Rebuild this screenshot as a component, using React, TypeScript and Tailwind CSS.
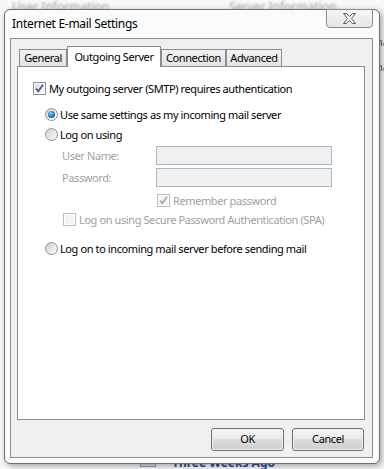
const F = { fontFamily: '"Noto Sans", "Open Sans", sans-serif' };

function CheckBox({ checked, disabled }: { checked?: boolean; disabled?: boolean }) {
  return (
    <div className={`w-[13px] h-[13px] shrink-0 border ${disabled ? 'border-[#bcbcbc]' : 'border-[#8e8f8f]'} bg-white p-px`}>
      <div className={`w-full h-full ${disabled ? 'bg-[#f4f4f4]' : 'bg-gradient-to-br from-[#dcdcdc] to-[#fafafa]'} flex items-center justify-center`}>
        {checked && (
          <svg width="9" height="9" viewBox="0 0 9 9">
            <path d="M1 4.5 L3.3 7.3 L8 0.8" fill="none" stroke={disabled ? '#a8a8a8' : '#3d5a9e'} strokeWidth="1.8" />
          </svg>
        )}
      </div>
    </div>
  );
}

function Radio({ checked }: { checked?: boolean }) {
  return (
    <div className="w-[13px] h-[13px] shrink-0 rounded-full border border-[#8e8f8f] bg-gradient-to-br from-[#d5d5d5] to-[#ffffff] flex items-center justify-center">
      <div className="w-[9px] h-[9px] rounded-full bg-gradient-to-br from-[#cfcfcf] to-[#fbfbfb] flex items-center justify-center">
        {checked && (
          <div className="w-[7px] h-[7px] rounded-full bg-[radial-gradient(circle_at_40%_35%,#8fd4f5_0%,#1a8bd0_45%,#0a3e78_100%)]" />
        )}
      </div>
    </div>
  );
}

function Tab({ label, selected, w }: { label: string; selected?: boolean; w: string }) {
  if (selected)
    return (
      <div className={`${w} h-[21px] -mb-px relative z-10 bg-white border border-b-0 border-[#898c95] flex items-start justify-center pt-[3px] text-[11px] text-black leading-[14px]`}>
        {label}
      </div>
    );
  return (
    <div className={`${w} h-[17px] bg-gradient-to-b from-[#f2f2f2] to-[#e3e3e3] border border-b-0 border-[#898c95] flex items-center justify-center text-[11px] text-black leading-[14px]`}>
      {label}
    </div>
  );
}

function Button({ label, w }: { label: string; w: string }) {
  return (
    <div className={`${w} h-[23px] rounded-[3px] border border-[#707070] p-px`}>
      <div className="w-full h-full rounded-[2px] bg-[linear-gradient(to_bottom,#f2f2f2_0%,#ebebeb_50%,#dddddd_50%,#cfcfcf_100%)] flex items-center justify-center text-[11px] text-black">
        {label}
      </div>
    </div>
  );
}

export default function App() {
  return (
    <div className="relative w-[384px] h-[469px] overflow-hidden bg-[#f7f8f9]" style={F}>
      {/* background behind dialog */}
      <div className="flex flex-col h-full">
        <div className="h-[20px] flex items-start gap-[120px] pl-[12px] pt-[1px] text-[12px] text-[#a9a9a9] blur-[1px] leading-none">
          <span>User Information</span>
          <span>Server Information</span>
        </div>
        <div className="flex-1" />
        <div className="h-[12px] flex items-start pl-[140px] gap-[16px]">
          <div className="w-[16px] h-[10px] bg-[#d6dfeb] border border-[#8aa0c2]" />
          <span className="text-[12px] font-bold text-[#2a4c98] leading-none">Three Weeks Ago</span>
        </div>
      </div>
      <div className="absolute left-[376px] top-[36px] flex flex-col gap-[14px] text-[11px] text-[#555] leading-none">
        <span>na</span>
        <span>na</span>
      </div>

      {/* dialog window */}
      <div className="absolute left-[4px] top-[9px] w-[376px] h-[455px] rounded-[6px] border border-[#6f6f6f] bg-[#fafbfc] shadow-[2px_2px_6px_rgba(0,0,0,0.35)] flex flex-col pl-[5px] pr-[6px] pb-[5px]">
        <div className="h-[28px] flex items-start justify-between">
          <div className="pl-[2px] pt-[7px] text-[12px] text-black leading-[14px] tracking-[-0.3px]">Internet E-mail Settings</div>
          <div className="w-[47px] h-[19px] -mt-px rounded-b-[4px] border border-[#8a8a8a] bg-gradient-to-b from-[#f6f6f6] to-[#e6e6e6] flex items-center justify-center">
            <svg width="15" height="11" viewBox="0 0 15 11">
              <path d="M1.5 0.5 H4.5 L7.5 3.5 L10.5 0.5 H13.5 L9.5 5.5 L13.5 10.5 H10.5 L7.5 7.5 L4.5 10.5 H1.5 L5.5 5.5 Z" fill="#f8f8f8" stroke="#5a5a5a" strokeWidth="1" strokeLinejoin="round" />
            </svg>
          </div>
        </div>
        {/* client area */}
        <div className="flex-1 border border-[#8c8c8c] bg-[#f0f0f0] flex flex-col pl-[6px] pr-[7px] pt-[7px] tracking-[-0.4px]">
          {/* tabs */}
          <div className="flex items-end pl-[2px] h-[20px]">
            <Tab label="General" w="w-[48px]" />
            <Tab label="Outgoing Server" w="w-[94px]" selected />
            <Tab label="Connection" w="w-[65px]" />
            <Tab label="Advanced" w="w-[56px]" />
          </div>
          {/* tab panel */}
          <div className="h-[354px] w-[348px] border border-[#898c95] bg-white flex flex-col text-[11px] text-black leading-none">
            <div className="mt-[11px] h-[20px] flex items-center pl-[15px] gap-[3px]">
              <CheckBox checked />
              <span>My outgoing server (SMTP) requires authentication</span>
            </div>
            <div className="mt-[7px] h-[19px] flex items-center pl-[27px] gap-[2px]">
              <Radio checked />
              <span>Use same settings as my incoming mail server</span>
            </div>
            <div className="h-[20px] flex items-center pl-[27px] gap-[2px]">
              <Radio />
              <span>Log on using</span>
            </div>
            <div className="mt-[2px] h-[19px] flex items-center pl-[44px]">
              <span className="w-[94px] text-[#a0a0a0]">User Name:</span>
              <div className="w-[176px] h-[19px] border border-[#a7b8cd] bg-[#f0f0f0]" />
            </div>
            <div className="mt-[3px] h-[19px] flex items-center pl-[44px]">
              <span className="w-[94px] text-[#a0a0a0]">Password:</span>
              <div className="w-[176px] h-[19px] border border-[#a7b8cd] bg-[#f0f0f0]" />
            </div>
            <div className="mt-[3px] h-[20px] flex items-center pl-[139px] gap-[3px] text-[#a0a0a0]">
              <CheckBox checked disabled />
              <span>Remember password</span>
            </div>
            <div className="h-[19px] flex items-center pl-[45px] gap-[3px] text-[#a0a0a0]">
              <CheckBox disabled />
              <span>Log on using Secure Password Authentication (SPA)</span>
            </div>
            <div className="mt-[9px] h-[20px] flex items-center pl-[27px] gap-[2px]">
              <Radio />
              <span>Log on to incoming mail server before sending mail</span>
            </div>
          </div>
          {/* buttons */}
          <div className="mt-[8px] flex justify-end gap-[8px] pr-px">
            <Button label="OK" w="w-[73px]" />
            <Button label="Cancel" w="w-[72px]" />
          </div>
        </div>
      </div>
    </div>
  );
}
